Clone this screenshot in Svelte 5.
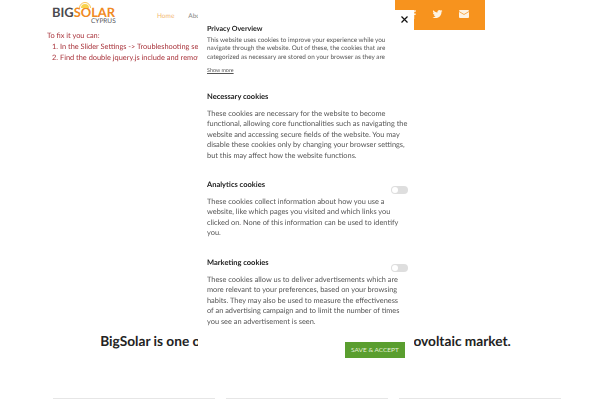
<script lang="ts">
	const sections = [
		{
			title: 'Necessary cookies',
			toggle: false,
			text: 'These cookies are necessary for the website to become functional, allowing core functionalities such as navigating the website and accessing secure fields of the website. You may disable these cookies only by changing your browser settings, but this may affect how the website functions.'
		},
		{
			title: 'Analytics cookies',
			toggle: true,
			text: 'These cookies collect information about how you use a website, like which pages you visited and which links you clicked on. None of this information can be used to identify you.'
		},
		{
			title: 'Marketing cookies',
			toggle: true,
			text: 'These cookies allow us to deliver advertisements which are more relevant to your preferences, based on your browsing habits. They may also be used to measure the effectiveness of\u00a0an advertising campaign and to limit the number of times you\u00a0see an advertisement is seen.'
		}
	];
</script>

<div class="page">
	<header class="header">
		<div class="logo">
			<svg class="sun" width="12" height="7" viewBox="0 0 12 7">
				<path d="M2 7 A4 4 0 0 1 10 7 Z" fill="#f9d24c" />
				<path d="M0.500 7 A5.500 5.500 0 0 1 11.500 7" fill="none" stroke="#f7b52c" stroke-width="0.800" />
			</svg>
			<div class="logo-name"><span class="big">BIG</span><span class="solar">SOLAR</span></div>
			<div class="logo-sub">CYPRUS</div>
		</div>
		<nav class="nav">
			<span class="active">Home</span>
			<span>About</span>
		</nav>
		<div class="social">
			<svg width="5" height="9" viewBox="0 0 10 18" fill="#fdf3e3">
				<path d="M6.500 18V10h2.700l.400-3.100H6.500V4.900c0-.900.300-1.500 1.500-1.500h1.700V.600C9.400.500 8.400.400 7.300.400 4.900.400 3.300 1.900 3.300 4.500v2.400H.500V10h2.800v8z" />
			</svg>
			<svg width="11" height="10" viewBox="0 0 24 24" fill="#fdf3e3">
				<path d="M23.950 4.570a10 10 0 0 1-2.820.770 4.960 4.960 0 0 0 2.160-2.720c-.950.550-2 .960-3.130 1.190a4.920 4.920 0 0 0-8.380 4.480C7.690 8.090 4.070 6.130 1.640 3.160a4.820 4.820 0 0 0-.660 2.470c0 1.710.870 3.210 2.190 4.100a4.900 4.900 0 0 1-2.230-.620v.060a4.920 4.920 0 0 0 3.950 4.830 5 5 0 0 1-2.210.080 4.940 4.940 0 0 0 4.600 3.420A9.870 9.870 0 0 1 0 19.540a14 14 0 0 0 7.560 2.210c9.050 0 14-7.500 14-13.980 0-.210 0-.420-.020-.630a9.940 9.940 0 0 0 2.460-2.550z" />
			</svg>
			<svg width="10" height="8" viewBox="0 0 20 16">
				<rect width="20" height="16" rx="2" fill="#fdf3e3" />
				<path d="M0 3 L10 9 L20 3" fill="none" stroke="#f7931e" stroke-width="1.500" />
			</svg>
		</div>
	</header>

	<div class="notice">
		<p>To fix it you can:</p>
		<ol>
			<li>In the Slider Settings -&gt; Troubleshooting settings</li>
			<li>Find the double jquery.js include and remove it</li>
		</ol>
	</div>

	<h1 class="headline">BigSolar is one of the leading companies in the photovoltaic market.</h1>

	<div class="cards">
		<div class="card"></div>
		<div class="card"></div>
		<div class="card"></div>
	</div>
</div>

<div class="modal" role="dialog" aria-label="Privacy Overview">
	<button class="close" aria-label="Close">
		<svg width="7" height="7" viewBox="0 0 7 7">
			<path d="M0.500 0.500 L6.500 6.500 M6.500 0.500 L0.500 6.500" stroke="#111" stroke-width="1.200" />
		</svg>
	</button>
	<h2 class="overview-title">Privacy Overview</h2>
	<p class="overview">
		This website uses cookies to improve your experience while you navigate through the website. Out of these, the cookies that are categorized as necessary are stored on your browser as they are essential for the working of basic functionalities of the website.
	</p>
	<span class="more">Show more</span>

	{#each sections as section}
		<section class="section">
			<div class="section-head">
				<h3>{section.title}</h3>
				{#if section.toggle}
					<span class="toggle"><span class="knob"></span></span>
				{/if}
			</div>
			<p>{section.text}</p>
		</section>
	{/each}

	<div class="actions">
		<button class="save">SAVE &amp; ACCEPT</button>
	</div>
</div>

<style>
	:global(body) {
		background: #fff;
		overflow: hidden;
		text-rendering: geometricPrecision;
	}

	.page {
		height: 400px;
		overflow: hidden;
		font-family: Lato, 'Liberation Sans', sans-serif;
	}

	.header {
		display: flex;
		align-items: flex-start;
		height: 30px;
		padding-left: 52px;
	}

	.logo {
		position: relative;
		width: 105px;
		padding-top: 6px;
		line-height: 1;
	}

	.sun {
		position: absolute;
		left: 27px;
		top: 1px;
		z-index: 1;
	}

	.logo-name {
		font-size: 12.900px;
		font-weight: 700;
		position: relative;
	}

	.big {
		color: #4a4a4f;
	}

	.solar {
		color: #f08a24;
	}

	.logo-sub {
		margin: 0 0 0 39px;
		font-size: 6.500px;
		color: #55555a;
	}

	.nav {
		display: flex;
		gap: 14px;
		padding-top: 13px;
		font-size: 6.500px;
		color: #888;
		white-space: nowrap;
		width: 238px;
	}

	.active {
		color: #f2b872;
	}

	.social {
		display: flex;
		align-items: center;
		gap: 16px;
		box-sizing: border-box;
		width: 90px;
		height: 30px;
		padding: 0 0 2px 16px;
		background: #f7931e;
	}

	/* grayscale text edges, the reference has no colour fringes */
	.notice,
	.overview,
	.section p,
	.section h3,
	.overview-title,
	.more {
		will-change: transform;
	}

	.notice {
		padding: 0 0 0 47px;
		font-size: 7.400px;
		line-height: 11px;
		color: #a8323a;
		white-space: nowrap;
	}

	.notice p {
		margin: 0;
	}

	.notice ol {
		margin: 0;
		padding-left: 13px;
	}

	.headline {
		margin: 0;
		padding: 269px 0 0 11px;
		font-size: 13.700px;
		line-height: 18px;
		font-weight: 700;
		color: #222;
		text-align: center;
		white-space: nowrap;
	}

	.cards {
		display: flex;
		gap: 11px;
		padding: 48px 39px 0 53px;
	}

	.card {
		flex: 1;
		height: 40px;
		border-top: 1px solid #e6e6e6;
	}

	.modal {
		position: absolute;
		left: 198px;
		top: 10px;
		box-sizing: border-box;
		width: 216px;
		height: 360px;
		padding: 14px 6px 0 9px;
		background: #fff;
		overflow: hidden;
		font-family: Lato, 'Liberation Sans', sans-serif;
		color: #555;
	}

	.close {
		position: absolute;
		right: 6px;
		top: 6px;
		width: 7px;
		height: 7px;
		padding: 0;
		border: 0;
		background: none;
		display: flex;
	}

	.overview-title,
	.section h3 {
		margin: 0;
		font-size: 7.500px;
		line-height: 10px;
		font-weight: 700;
		color: #222;
	}

	.overview-title {
		font-size: 7.100px;
	}

	.overview {
		margin: 3px 0 0;
		height: 25px;
		overflow: hidden;
		font-size: 6.400px;
		line-height: 8.300px;
	}

	.more {
		display: block;
		margin-top: 5px;
		font-size: 5.400px;
		line-height: 8px;
		text-decoration: underline;
	}

	.section {
		margin-top: 19px;
	}

	.more + .section {
		margin-top: 17px;
	}

	.section-head {
		display: flex;
		justify-content: space-between;
		align-items: flex-start;
	}

	.section p {
		margin: 7px 0 0;
		font-size: 7.400px;
		line-height: 10.400px;
	}

	.toggle {
		display: block;
		box-sizing: border-box;
		width: 17px;
		height: 8px;
		margin: 6px 0 -4px;
		border-radius: 4px;
		background: #dedede;
		padding: 1px;
	}

	.knob {
		display: block;
		width: 6px;
		height: 6px;
		border-radius: 50%;
		background: #fff;
	}

	.actions {
		display: flex;
		justify-content: flex-end;
		margin: 15px 3px 0 0;
	}

	.save {
		width: 60px;
		height: 16px;
		padding: 0;
		border: 0;
		background: #5a9e2f;
		color: #e4f0d8;
		font-family: inherit;
		font-size: 6.500px;
	}
</style>
